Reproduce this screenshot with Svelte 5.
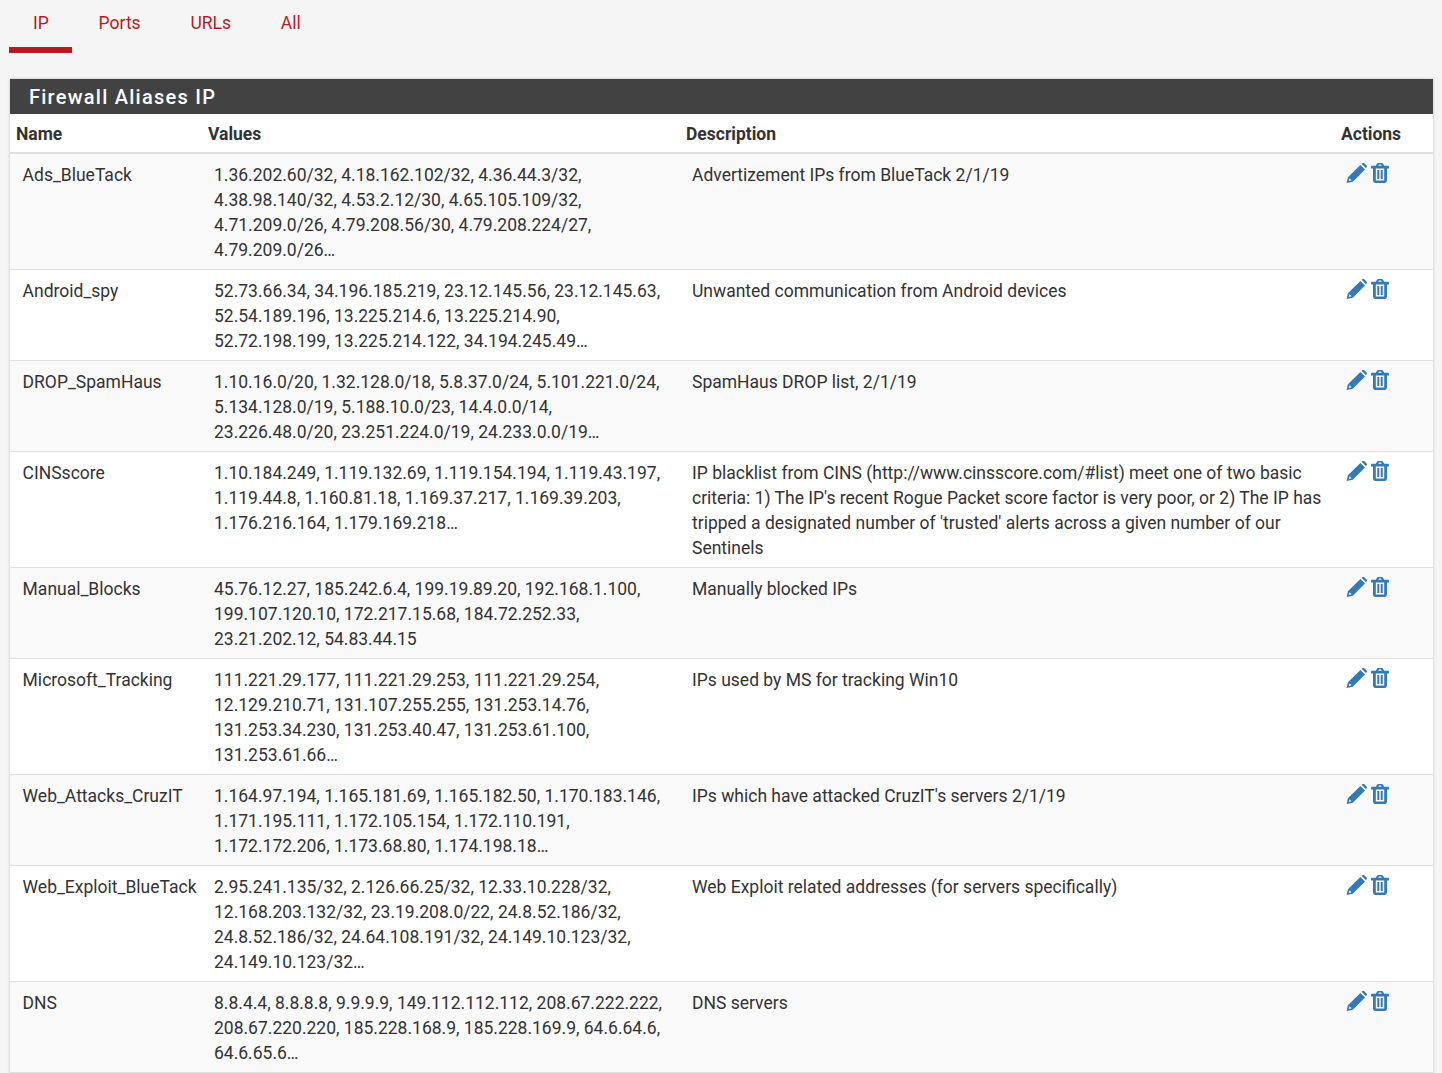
<script lang="ts">
  const tabs = ['IP', 'Ports', 'URLs', 'All'];

  const aliases = [
    { name: 'Ads_BlueTack', values: '1.36.202.60/32, 4.18.162.102/32, 4.36.44.3/32, 4.38.98.140/32, 4.53.2.12/30, 4.65.105.109/32, 4.71.209.0/26, 4.79.208.56/30, 4.79.208.224/27, 4.79.209.0/26…', description: 'Advertizement IPs from BlueTack 2/1/19' },
    { name: 'Android_spy', values: '52.73.66.34, 34.196.185.219, 23.12.145.56, 23.12.145.63, 52.54.189.196, 13.225.214.6, 13.225.214.90, 52.72.198.199, 13.225.214.122, 34.194.245.49…', description: 'Unwanted communication from Android devices' },
    { name: 'DROP_SpamHaus', values: '1.10.16.0/20, 1.32.128.0/18, 5.8.37.0/24, 5.101.221.0/24, 5.134.128.0/19, 5.188.10.0/23, 14.4.0.0/14, 23.226.48.0/20, 23.251.224.0/19, 24.233.0.0/19…', description: 'SpamHaus DROP list, 2/1/19' },
    { name: 'CINSscore', values: '1.10.184.249, 1.119.132.69, 1.119.154.194, 1.119.43.197, 1.119.44.8, 1.160.81.18, 1.169.37.217, 1.169.39.203, 1.176.216.164, 1.179.169.218…', description: "IP blacklist from CINS (http://www.cinsscore.com/#list) meet one of two basic criteria: 1) The IP's recent Rogue Packet score factor is very poor, or 2) The IP has tripped a designated number of 'trusted' alerts across a given number of our Sentinels" },
    { name: 'Manual_Blocks', values: '45.76.12.27, 185.242.6.4, 199.19.89.20, 192.168.1.100, 199.107.120.10, 172.217.15.68, 184.72.252.33, 23.21.202.12, 54.83.44.15', description: 'Manually blocked IPs' },
    { name: 'Microsoft_Tracking', values: '111.221.29.177, 111.221.29.253, 111.221.29.254, 12.129.210.71, 131.107.255.255, 131.253.14.76, 131.253.34.230, 131.253.40.47, 131.253.61.100, 131.253.61.66…', description: 'IPs used by MS for tracking Win10' },
    { name: 'Web_Attacks_CruzIT', values: '1.164.97.194, 1.165.181.69, 1.165.182.50, 1.170.183.146, 1.171.195.111, 1.172.105.154, 1.172.110.191, 1.172.172.206, 1.173.68.80, 1.174.198.18…', description: "IPs which have attacked CruzIT's servers 2/1/19" },
    { name: 'Web_Exploit_BlueTack', values: '2.95.241.135/32, 2.126.66.25/32, 12.33.10.228/32, 12.168.203.132/32, 23.19.208.0/22, 24.8.52.186/32, 24.8.52.186/32, 24.64.108.191/32, 24.149.10.123/32, 24.149.10.123/32…', description: 'Web Exploit related addresses (for servers specifically)' },
    { name: 'DNS', values: '8.8.4.4, 8.8.8.8, 9.9.9.9, 149.112.112.112, 208.67.222.222, 208.67.220.220, 185.228.168.9, 185.228.169.9, 64.6.64.6, 64.6.65.6…', description: 'DNS servers' }
  ];
</script>

<div class="page">
  <ul class="tabs">
    {#each tabs as tab, i}
      <li class:active={i === 0}><span>{tab}</span></li>
    {/each}
  </ul>

  <section class="panel">
    <h2>Firewall Aliases IP</h2>
    <table>
      <colgroup>
        <col class="c-name" />
        <col class="c-values" />
        <col class="c-desc" />
        <col />
      </colgroup>
      <thead>
        <tr>
          <th>Name</th>
          <th>Values</th>
          <th>Description</th>
          <th>Actions</th>
        </tr>
      </thead>
      <tbody>
        {#each aliases as alias}
          <tr>
            <td>{alias.name}</td>
            <td>{alias.values}</td>
            <td>{alias.description}</td>
            <td class="actions">
              <svg class="icon" width="21" height="20" viewBox="0 0 21 20" aria-hidden="true">
                <path fill-rule="evenodd" d="M14.400 2 19 6.600 6.800 18.800 .6 20 1.900 14.300Z M3.600 15.200 2.800 17.900 5.500 17.200Z" />
                <path d="M15.600.8l.7-.6a1.400 1.400 0 0 1 2 0l2.200 2.200a1.400 1.400 0 0 1 0 2l-.7.7Z" />
              </svg>
              <svg class="icon" width="18" height="20" viewBox="0 0 18 20" aria-hidden="true">
                <path fill-rule="evenodd" d="M4.800 2.800 5.800 1C6.100.4 6.700 0 7.300 0h3.400c.6 0 1.200.4 1.500 1l1 1.800h3.800c.6 0 1 .5 1 1.100v1.500H16v11.800c0 1.500-1 2.800-2.400 2.800H4.400C3 20 2 18.700 2 17.200V5.400H0V3.900c0-.6.400-1.100 1-1.100Z M7.300 2.800h3.400L10 1.600H8Z M4.800 5.400v11.800c0 .3.100.4.300.4h7.800c.2 0 .3-.1.300-.4V5.400Z M6.300 7h2v9h-2Z M9.700 7h2v9h-2Z" />
              </svg>
            </td>
          </tr>
        {/each}
      </tbody>
    </table>
  </section>
</div>

<style>
  :global(body) {
    margin: 0;
    background: #f5f5f5;
  }

  .page {
    height: 1073px;
    overflow: hidden;
    padding: 0 9px 0 10px;
    font-family: Roboto, "Liberation Sans", sans-serif;
    font-size: 17.5px;
    color: #333;
  }

  .tabs {
    list-style: none;
    margin: 0 0 26px -1px;
    padding: 0;
    height: 53px;
    display: flex;
  }

  .tabs li {
    box-sizing: border-box;
    height: 53px;
    padding: 11px 23.5px 0 24px;
    margin-right: 2.3px;
    color: #b71c1c;
    line-height: 24px;
  }

  .tabs li.active {
    border-bottom: 6px solid #b71c1c;
  }

  .panel {
    background: #fff;
    box-shadow: 0 0 3px rgba(0, 0, 0, 0.2);
  }

  h2 {
    margin: 0;
    height: 35px;
    padding-left: 19px;
    background: #424242;
    color: #fff;
    font-size: 20px;
    font-weight: 500;
    letter-spacing: 1.25px;
    line-height: 37px;
  }

  table {
    width: 100%;
    table-layout: fixed;
    border-collapse: separate;
    border-spacing: 0;
  }

  .c-name { width: 192px; }
  .c-values { width: 478px; }
  .c-desc { width: 655px; }

  th {
    padding: 8px 6px 6px;
    text-align: left;
    font-weight: 700;
    line-height: 24px;
    border-bottom: 2px solid #e0e0e0;
  }

  td {
    padding: 9px 12px 6px;
    vertical-align: top;
    line-height: 25px;
    border-top: 1px solid #e0e0e0;
  }

  td:first-child {
    padding-left: 12.6px;
  }

  tbody tr:first-child td {
    border-top: 0;
  }

  tbody tr:last-child td {
    border-bottom: 1px solid #e0e0e0;
  }

  tbody tr:nth-child(odd) {
    background: #f9f9f9;
  }

  .actions {
    white-space: nowrap;
    font-size: 0;
  }

  .icon {
    fill: #337ab7;
    margin-right: 3px;
    margin-left: -1px;
  }

  .icon + .icon {
    margin-left: 1px;
  }
</style>
